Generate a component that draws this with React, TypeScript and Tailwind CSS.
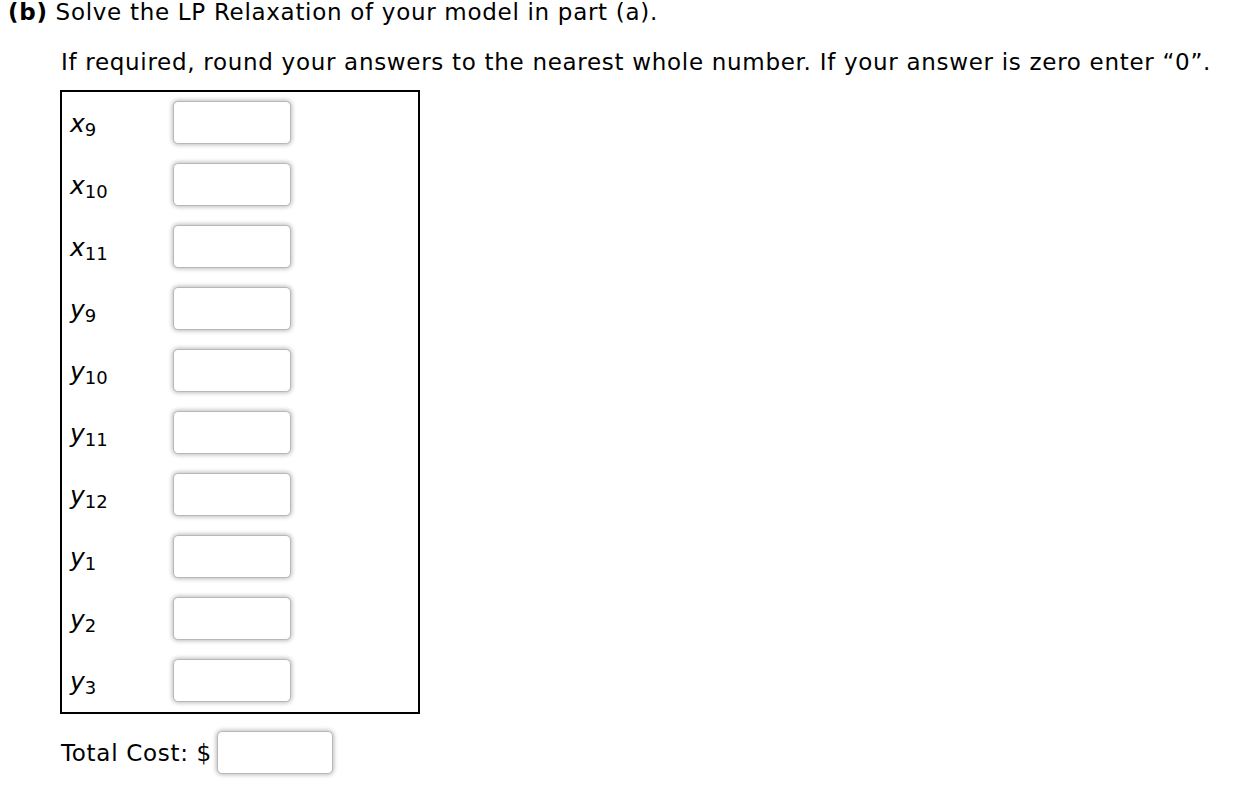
import React from 'react';

const rows: [string, string][] = [
  ['x', '9'],
  ['x', '10'],
  ['x', '11'],
  ['y', '9'],
  ['y', '10'],
  ['y', '11'],
  ['y', '12'],
  ['y', '1'],
  ['y', '2'],
  ['y', '3'],
];

const inputCls =
  'block h-[43px] rounded-[5px] border border-[#b8b8b8] bg-white shadow-[0_0_4px_1px_#bdbdbd] outline-none';

const App = () => {
  return (
    <div
      className="min-h-screen bg-white text-[23px] tracking-[0.7px] text-black"
      style={{ fontFamily: '"DejaVu Sans", Verdana, sans-serif' }}
    >
      <p className="pl-[8px] leading-[24px]">
        <span className="font-bold">(b)</span> Solve the LP Relaxation of your model in part (a).
      </p>
      <p className="mt-[26px] pl-[61px] leading-[24px]">
        If required, round your answers to the nearest whole number. If your answer is zero enter “0”.
      </p>
      <div className="ml-[60px] mt-[16px] w-[360px] border-2 border-black pt-[9px] pb-[10px] pl-[8px]">
        {rows.map(([v, sub], i) => (
          <div key={i} className={`flex items-center ${i > 0 ? 'mt-[19px]' : ''}`}>
            <div className="w-[103px] pt-[5px] leading-[24px] tracking-normal">
              <span className="italic text-[25px]">{v}</span>
              <span className="relative top-[4px] text-[18px]">{sub}</span>
            </div>
            <input type="text" className={`${inputCls} w-[118px]`} />
          </div>
        ))}
      </div>
      <div className="mt-[17px] flex items-center pl-[61px]">
        <span className="leading-[24px]">Total Cost: $</span>
        <input type="text" className={`${inputCls} ml-[5px] w-[116px]`} />
      </div>
    </div>
  );
};

export default App;
